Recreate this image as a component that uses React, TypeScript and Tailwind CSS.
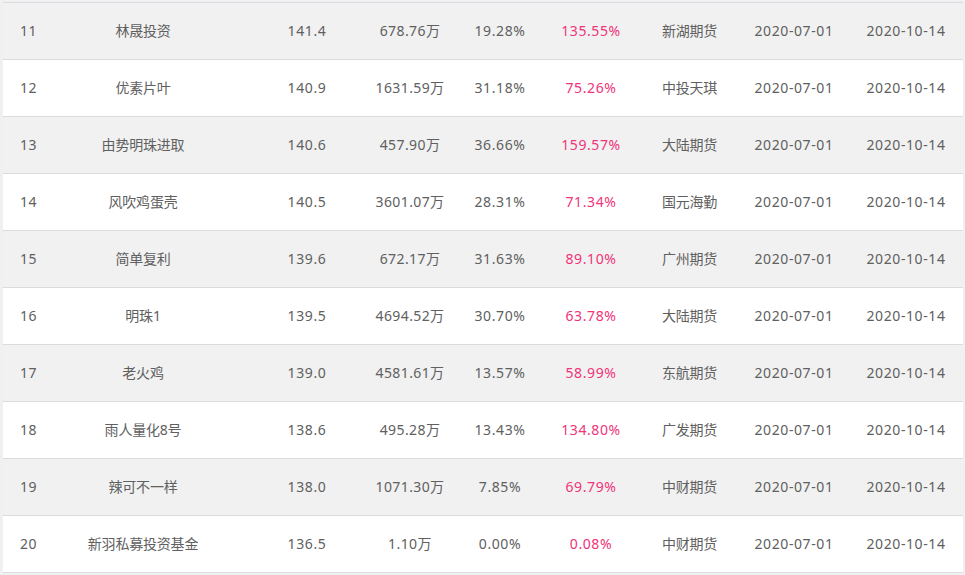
import React from "react";

const rows = [
  ["11", "林晟投资", "141.4", "678.76万", "19.28%", "135.55%", "新湖期货"],
  ["12", "优素片叶", "140.9", "1631.59万", "31.18%", "75.26%", "中投天琪"],
  ["13", "由势明珠进取", "140.6", "457.90万", "36.66%", "159.57%", "大陆期货"],
  ["14", "风吹鸡蛋壳", "140.5", "3601.07万", "28.31%", "71.34%", "国元海勤"],
  ["15", "简单复利", "139.6", "672.17万", "31.63%", "89.10%", "广州期货"],
  ["16", "明珠1", "139.5", "4694.52万", "30.70%", "63.78%", "大陆期货"],
  ["17", "老火鸡", "139.0", "4581.61万", "13.57%", "58.99%", "东航期货"],
  ["18", "雨人量化8号", "138.6", "495.28万", "13.43%", "134.80%", "广发期货"],
  ["19", "辣可不一样", "138.0", "1071.30万", "7.85%", "69.79%", "中财期货"],
  ["20", "新羽私募投资基金", "136.5", "1.10万", "0.00%", "0.08%", "中财期货"],
];

export default function App() {
  return (
    <div
      className="w-[965px] h-[575px] bg-[#f0f0f0] pt-[2px] pl-[3px] overflow-hidden text-[14px] text-[#606060]"
      style={{ fontFamily: '"Noto Sans", "Noto Sans CJK SC", sans-serif' }}
    >
      <div className="w-[960px] border-t border-[#dcdbe3] bg-white">
        {rows.map((r, i) => (
          <div
            key={r[0]}
            className={`grid grid-cols-[31px_218px_110px_96px_84px_98px_99px_110px_114px] h-[57px] items-center pb-[2px] border-b border-[#dcdce0] ${
              i % 2 === 0 ? "bg-[#f1f1f1]" : "bg-white"
            }`}
          >
            <div className="pl-[17px] whitespace-nowrap tracking-[0.6px]">{r[0]}</div>
            <div className="text-center whitespace-nowrap tracking-[-0.2px]">{r[1]}</div>
            <div className="text-center whitespace-nowrap tracking-[0.6px]">{r[2]}</div>
            <div className="text-center whitespace-nowrap tracking-[0.4px]">{r[3]}</div>
            <div className="text-center whitespace-nowrap tracking-[0.6px]">{r[4]}</div>
            <div className="text-center whitespace-nowrap tracking-[0.6px] text-[#f0337a]">{r[5]}</div>
            <div className="text-center whitespace-nowrap tracking-[-0.2px]">{r[6]}</div>
            <div className="text-center whitespace-nowrap tracking-[0.6px]">2020-07-01</div>
            <div className="text-center whitespace-nowrap tracking-[0.6px]">2020-10-14</div>
          </div>
        ))}
      </div>
    </div>
  );
}
